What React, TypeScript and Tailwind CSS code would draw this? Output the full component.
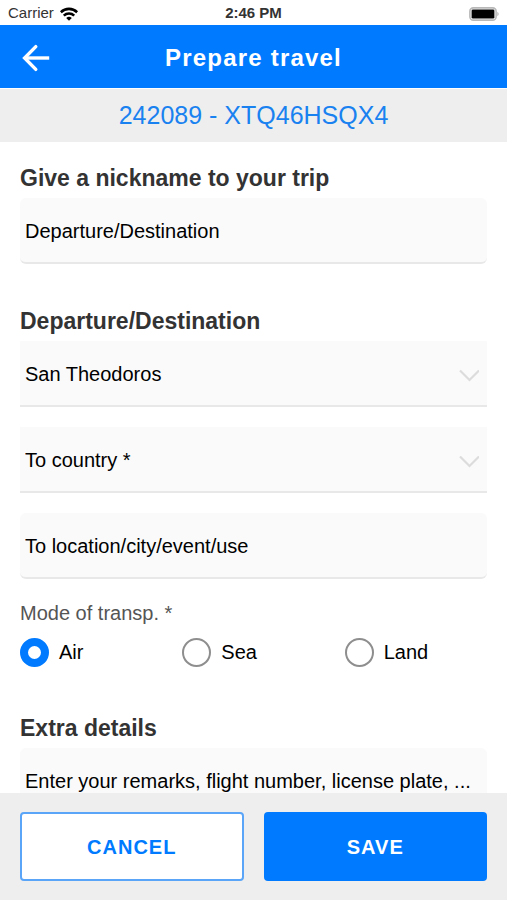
import { useState } from "react";
import type { ReactNode } from "react";

const COUNTRIES = ["San Theodoros", "Borduria", "Syldavia"];
const MODES = ["Air", "Sea", "Land"];

const fieldClass =
  "block h-[66px] w-full border-b-2 border-[#e8e8e8] bg-[#fafafa] px-[5px] pt-0.5 text-[20px] text-black outline-none placeholder:text-black placeholder:opacity-100";

function StatusBar() {
  return (
    <div className="grid h-[25px] shrink-0 grid-cols-3 items-center px-2 pt-0.5 text-[15px] text-[#333]">
      <div className="flex items-center gap-1.5">
        <span>Carrier</span>
        <svg width="18" height="14" viewBox="0 0 18 14" fill="none" stroke="#000" strokeWidth="2.6">
          <path d="M.8 5.2a11.8 11.8 0 0 1 16.4 0" />
          <path d="M3.8 8.6a7.6 7.6 0 0 1 10.4 0" />
          <path d="M9 13.8 6.2 11a4 4 0 0 1 5.6 0Z" fill="#000" stroke="none" />
        </svg>
      </div>
      <span className="text-center font-bold">2:46 PM</span>
      <svg className="justify-self-end" width="30" height="14" viewBox="0 0 30 14">
        <rect x="0.9" y="0.9" width="26.2" height="12.2" rx="3.4" fill="#fff" stroke="#b8b8b8" strokeWidth="1.6" />
        <rect x="2.6" y="2.4" width="22.8" height="9.2" rx="1.4" fill="#000" />
        <path d="M28.3 4.8c1.8.8 1.8 3.6 0 4.4Z" fill="#b8b8b8" />
      </svg>
    </div>
  );
}

function SectionTitle({ htmlFor, children }: { htmlFor: string; children: ReactNode }) {
  return (
    <h2 className="mb-1.5 text-[23px] leading-7 font-bold text-[#333]">
      <label htmlFor={htmlFor}>{children}</label>
    </h2>
  );
}

function CountrySelect({
  id,
  label,
  defaultValue,
}: {
  id: string;
  label: string;
  defaultValue: string;
}) {
  return (
    <div className="relative">
      <select
        id={id}
        aria-label={label}
        defaultValue={defaultValue}
        className={`${fieldClass} appearance-none pr-10`}
      >
        <option value="">{label}</option>
        {COUNTRIES.map((country) => (
          <option key={country}>{country}</option>
        ))}
      </select>
      <svg
        className="pointer-events-none absolute top-7 right-2"
        width="20"
        height="14"
        viewBox="0 0 20 14"
        fill="none"
        stroke="#dcdcdc"
        strokeWidth="2.2"
      >
        <path d="m1 1.5 9.5 9.5L20 1.5" />
      </svg>
    </div>
  );
}

export default function App() {
  const [mode, setMode] = useState("Air");

  return (
    <div className="flex h-screen flex-col bg-white font-['Liberation_Sans',Arial,sans-serif]">
      <StatusBar />

      <header className="grid h-16 shrink-0 grid-cols-[32px_1fr_32px] items-center border-b border-white bg-[#007bff] bg-clip-padding px-5 pt-0.5 text-white">
        <button type="button" aria-label="Back" className="flex justify-center">
          <svg width="28" height="28" viewBox="0 0 28 28" fill="none" stroke="currentColor" strokeWidth="3.4">
            <path d="M13.8 2.6 2.6 14l11.2 11.4" strokeLinecap="round" />
            <path d="M2.6 14H27.2" />
          </svg>
        </button>
        <h1 className="text-center text-[24px] font-bold tracking-wider">Prepare travel</h1>
      </header>

      <p className="flex h-[53px] shrink-0 items-center justify-center bg-[#eee] text-[25px] text-[#1a82f0]">
        242089 - XTQ46HSQX4
      </p>

      <main className="min-h-0 flex-1 overflow-y-auto px-5 pt-[22px] [scrollbar-width:none]">
        <section>
          <SectionTitle htmlFor="nickname">Give a nickname to your trip</SectionTitle>
          <input
            id="nickname"
            type="text"
            placeholder="Departure/Destination"
            className={`${fieldClass} rounded-md`}
          />
        </section>

        <section className="mt-[43px]">
          <SectionTitle htmlFor="from">Departure/Destination</SectionTitle>
          <div className="flex flex-col gap-5">
            <CountrySelect id="from" label="From country *" defaultValue="San Theodoros" />
            <CountrySelect id="to" label="To country *" defaultValue="" />
            <input
              type="text"
              aria-label="To location/city/event/use"
              placeholder="To location/city/event/use"
              className={`${fieldClass} rounded-md`}
            />
          </div>
        </section>

        <fieldset className="mt-[22px]">
          <legend className="text-[20px] leading-6 text-[#555]">Mode of transp. *</legend>
          <div className="mt-3 grid grid-cols-3 gap-5">
            {MODES.map((item) => (
              <label key={item} className="flex items-center gap-2.5 text-[20px] text-black">
                <input
                  type="radio"
                  name="mode"
                  checked={mode === item}
                  onChange={() => setMode(item)}
                  className="size-[29px] appearance-none rounded-full border-2 border-[#8e8e8e] bg-white checked:border-8 checked:border-[#007bff]"
                />
                {item}
              </label>
            ))}
          </div>
        </fieldset>

        <section className="mt-[47px] pb-5">
          <SectionTitle htmlFor="remarks">Extra details</SectionTitle>
          <input
            id="remarks"
            type="text"
            placeholder="Enter your remarks, flight number, license plate, ..."
            className={`${fieldClass} rounded-md`}
          />
        </section>
      </main>

      <footer className="grid shrink-0 grid-cols-2 gap-5 bg-[#eee] px-5 py-[19px] text-[20px] font-bold tracking-wider">
        <button type="button" className="h-[69px] rounded-sm border-2 border-[#5aa5f7] bg-white text-[#007bff]">
          CANCEL
        </button>
        <button type="button" className="h-[69px] rounded-sm bg-[#007bff] text-white">
          SAVE
        </button>
      </footer>
    </div>
  );
}
